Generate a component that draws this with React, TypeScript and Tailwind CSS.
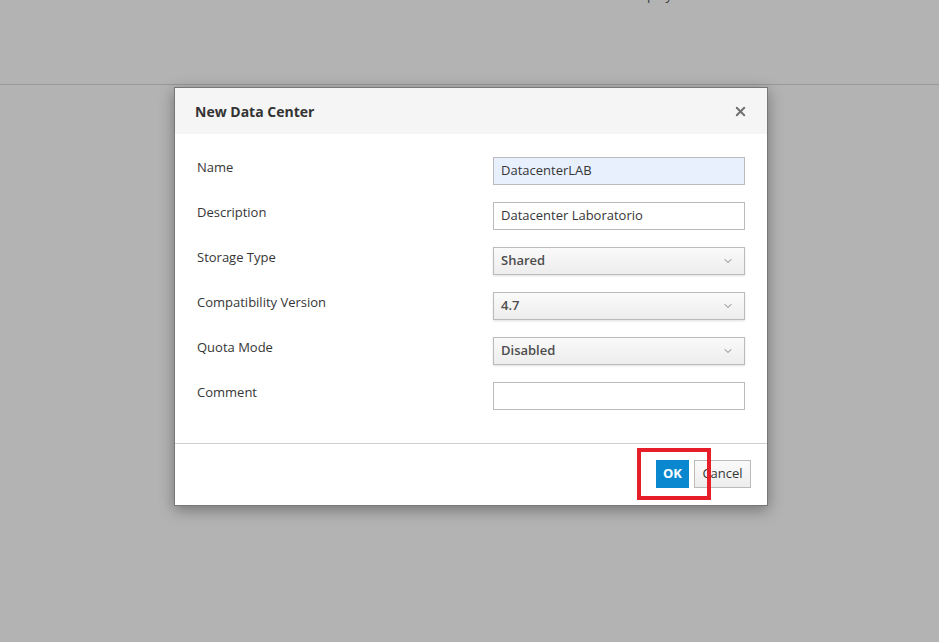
import { ChevronDown, X } from "lucide-react"

const rows = [
  { label: "Name", kind: "input", value: "DatacenterLAB", filled: true },
  { label: "Description", kind: "input", value: "Datacenter Laboratorio" },
  { label: "Storage Type", kind: "select", value: "Shared" },
  { label: "Compatibility Version", kind: "select", value: "4.7" },
  { label: "Quota Mode", kind: "select", value: "Disabled" },
  { label: "Comment", kind: "input", value: "" },
]

function Field({ kind, value, filled }: { kind: string; value: string; filled?: boolean }) {
  if (kind === "select") {
    return (
      <div className="flex h-[28px] w-[252px] items-center justify-between border border-[#bbbbbb] bg-gradient-to-b from-[#fafafa] to-[#ededed] pl-[7px] pr-[10px] text-[13px] font-semibold text-[#4d4d4d] shadow-[0_1px_2px_rgba(0,0,0,0.12)]">
        <span>{value}</span>
        <ChevronDown className="h-3 w-3 text-[#6f7173]" strokeWidth={1.8} />
      </div>
    )
  }
  return (
    <div
      className={`flex h-[28px] w-[252px] items-center border border-[#bbbbbb] pl-[7px] text-[13px] text-[#363636] ${
        filled ? "bg-[#e8f0fe]" : "bg-white"
      }`}
    >
      {value}
    </div>
  )
}

export default function App() {
  return (
    <div className="relative h-[642px] w-[939px] overflow-hidden bg-[#b3b3b3] font-['Open_Sans',sans-serif]">
      <div className="flex h-[85px] flex-col border-b border-[#999999]">
        <div className="-mt-[14px] pl-[556px] text-[13px] leading-[18px] text-[#3a3a3a]">No items to display</div>
      </div>

      {/* modal */}
      <div className="absolute left-[174px] top-[87px] w-[594px] border border-[#777777] bg-white shadow-[0_4px_14px_rgba(0,0,0,0.35)]">
        <div className="flex h-[46px] items-center justify-between bg-[#f5f5f5] pl-[20px] pr-[19px]">
          <h4 className="text-[14px] font-bold text-[#333333]">New Data Center</h4>
          <X className="h-[15px] w-[15px] text-[#6f6f6f]" strokeWidth={3} />
        </div>

        <div className="flex flex-col gap-[17px] px-[22px] pb-[33px] pt-[23px]">
          {rows.map((r) => (
            <div key={r.label} className="flex items-start justify-between">
              <span className="text-[13px] leading-[20px] text-[#363636]">{r.label}</span>
              <Field kind={r.kind} value={r.value} filled={r.filled} />
            </div>
          ))}
        </div>

        <div className="flex h-[62px] items-start justify-end gap-[5px] border-t border-[#cfcfcf] pr-[16px] pt-[16px]">
          <button className="h-[28px] w-[33px] bg-[#0a88cf] text-[13px] font-bold text-white">OK</button>
          <button className="h-[28px] w-[57px] border border-[#bbbbbb] bg-gradient-to-b from-[#fafafa] to-[#ededed] text-[13px] text-[#363636]">
            Cancel
          </button>
        </div>
      </div>

      {/* highlight annotation */}
      <div className="absolute left-[637px] top-[448px] h-[52px] w-[74px] border-[4px] border-[#e61e2a]" />
    </div>
  )
}
